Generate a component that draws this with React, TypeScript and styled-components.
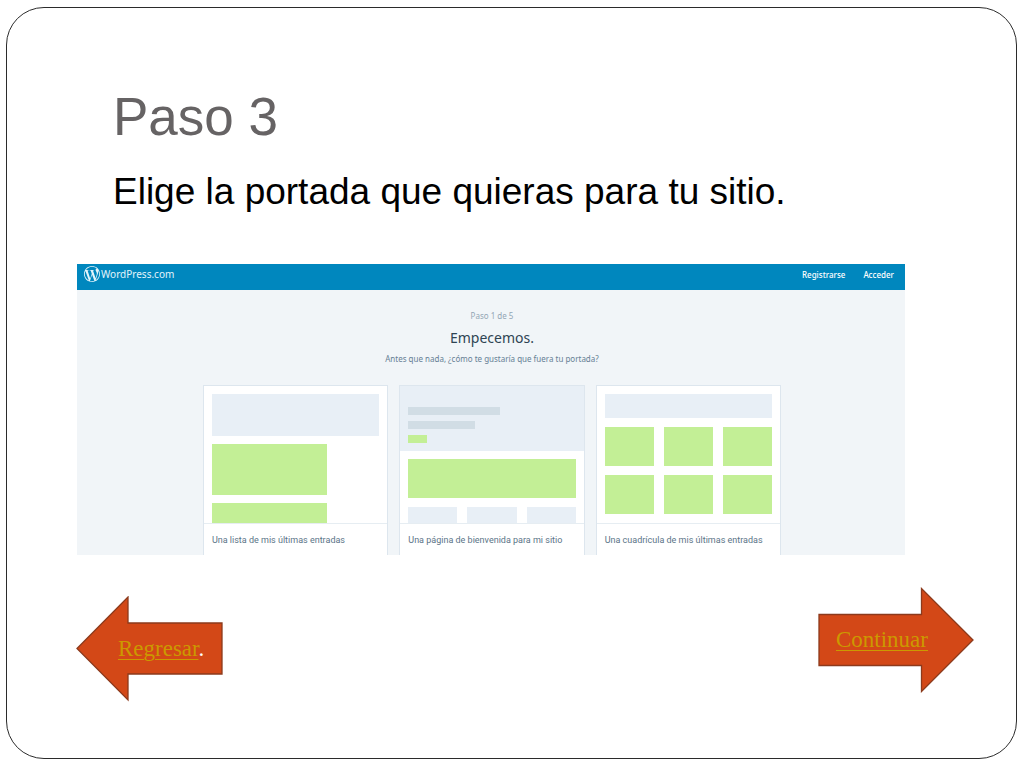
import React from "react";
import styled, { createGlobalStyle } from "styled-components";
import { SiWordpress } from "react-icons/si";

const GlobalStyle = createGlobalStyle`
  *, *::before, *::after { box-sizing: border-box; }
  body { margin: 0; background: #fff; }
`;

const Page = styled.div`
  display: flex;
  min-height: 100vh;
  padding: 7px 7px 10px 6px;
`;

const Slide = styled.main`
  flex: 1;
  min-width: 0;
  padding: 77px 42px 56px 70px;
  border: 1px solid #2b2b2b;
  border-radius: 38px;
  font-family: "Liberation Sans", Arial, sans-serif;
`;

const Title = styled.h1`
  margin: 0 0 0 36px;
  font-size: 53px;
  line-height: 64px;
  font-weight: 400;
  color: #666364;
`;

const Lead = styled.p`
  margin: 20px 0 0 36px;
  font-size: 37px;
  line-height: 46px;
  color: #000;
`;

const Site = styled.section`
  margin: 49px 69px 0 0;
  height: 291px;
  overflow: hidden;
  background: #f1f5f8;
  font-family: "Noto Sans", "Open Sans", sans-serif;
`;

const TopBar = styled.header`
  display: flex;
  align-items: flex-start;
  justify-content: space-between;
  height: 26px;
  padding: 2px 11px 0 7px;
  background: #0087be;
  color: #fff;
`;

const Brand = styled.a`
  display: flex;
  align-items: center;
  gap: 1px;
  color: #e3f4fb;
  font-size: 10px;
  line-height: 16px;
  text-decoration: none;
`;

const Menu = styled.nav`
  display: flex;
  gap: 18px;
`;

const MenuLink = styled.a`
  color: #fff;
  font-size: 8px;
  line-height: 18px;
  font-weight: 500;
  text-decoration: none;
`;

const Content = styled.div`
  padding: 19px 0 0 2px;
`;

const Intro = styled.div`
  text-align: center;
`;

const Step = styled.p`
  margin: 0;
  font-size: 8px;
  line-height: 14px;
  color: #93a6b5;
`;

const Heading = styled.h2`
  margin: 4px 0;
  font-size: 14px;
  line-height: 22px;
  font-weight: 400;
  color: #2e4453;
`;

const Question = styled.p`
  margin: 0;
  font-size: 8px;
  line-height: 12px;
  color: #668095;
`;

const Cards = styled.div`
  display: grid;
  grid-template-columns: repeat(3, 1fr);
  gap: 11px;
  width: 70%;
  margin: 20px auto 0;
`;

const Card = styled.article`
  border: 1px solid #dde6ee;
  border-bottom: 0;
  background: #fff;
`;

const Preview = styled.div`
  height: 138px;
  overflow: hidden;
  border-bottom: 1px solid #e6edf2;
`;

const Stack = styled.div<{ $gap: number }>`
  display: flex;
  flex-direction: column;
  gap: ${(p) => p.$gap}px;
  padding: 8px 8px 0;
`;

const Hero = styled.div`
  display: flex;
  flex-direction: column;
  gap: 6px;
  height: 65px;
  padding: 21px 8px 0;
  background: #e8eff6;
`;

const Trio = styled.div`
  display: grid;
  grid-template-columns: repeat(3, 1fr);
  gap: 9px 10px;
`;

const tones = { green: "#c3ef96", pale: "#e8eff6", grey: "#d1dde5" };

const Block = styled.div<{ $tone: keyof typeof tones; $h: number; $w?: string }>`
  flex: none;
  width: ${(p) => p.$w ?? "100%"};
  height: ${(p) => p.$h}px;
  background: ${(p) => tones[p.$tone]};
`;

const Caption = styled.p`
  margin: 0;
  padding: 9px 0 14px 8px;
  font-family: Roboto, "Noto Sans", sans-serif;
  font-size: 9px;
  line-height: 14px;
  white-space: nowrap;
  color: #5b7487;
`;

const Pager = styled.nav`
  display: flex;
  align-items: flex-start;
  justify-content: space-between;
  margin: 32px 0 0 -1px;
`;

const ArrowBox = styled.div<{ $w: number; $side: "left" | "right" }>`
  position: relative;
  display: flex;
  align-items: center;
  width: ${(p) => p.$w}px;
  height: 106px;
  margin-top: ${(p) => (p.$side === "left" ? 9 : 0)}px;
  padding-left: ${(p) => (p.$side === "left" ? 42 : 18)}px;
  font-family: "Liberation Serif", "Times New Roman", serif;
  font-size: 23px;
  line-height: 28px;
  color: #fff;
`;

const ArrowShape = styled.svg`
  position: absolute;
  inset: 0;
  fill: #d34817;
  stroke: #8c3a1c;
  stroke-width: 1.3;
`;

const ArrowText = styled.span`
  position: relative;
`;

const ArrowLink = styled.a`
  color: #cc9900;
  text-decoration-thickness: 1px;
  text-underline-offset: 3px;
`;

export default function App() {
  return (
    <>
      <GlobalStyle />
      <Page>
        <Slide>
          <Title>Paso 3</Title>
          <Lead>Elige la portada que quieras para tu sitio.</Lead>

          <Site>
            <TopBar>
              <Brand href="#">
                <SiWordpress size={16} aria-hidden />
                WordPress.com
              </Brand>
              <Menu>
                <MenuLink href="#">Registrarse</MenuLink>
                <MenuLink href="#">Acceder</MenuLink>
              </Menu>
            </TopBar>
            <Content>
              <Intro>
                <Step>Paso 1 de 5</Step>
                <Heading>Empecemos.</Heading>
                <Question>Antes que nada, ¿cómo te gustaría que fuera tu portada?</Question>
              </Intro>
              <Cards>
                <Card>
                  <Preview>
                    <Stack $gap={8}>
                      <Block $tone="pale" $h={42} />
                      <Block $tone="green" $h={51} $w="69%" />
                      <Block $tone="green" $h={51} $w="69%" />
                    </Stack>
                  </Preview>
                  <Caption>Una lista de mis últimas entradas</Caption>
                </Card>
                <Card>
                  <Preview>
                    <Hero>
                      <Block $tone="grey" $h={8} $w="55%" />
                      <Block $tone="grey" $h={8} $w="40%" />
                      <Block $tone="green" $h={8} $w="11%" />
                    </Hero>
                    <Stack $gap={9}>
                      <Block $tone="green" $h={39} />
                      <Trio>
                        <Block $tone="pale" $h={39} />
                        <Block $tone="pale" $h={39} />
                        <Block $tone="pale" $h={39} />
                      </Trio>
                    </Stack>
                  </Preview>
                  <Caption>Una página de bienvenida para mi sitio</Caption>
                </Card>
                <Card>
                  <Preview>
                    <Stack $gap={9}>
                      <Block $tone="pale" $h={24} />
                      <Trio>
                        {[0, 1, 2, 3, 4, 5].map((n) => (
                          <Block key={n} $tone="green" $h={39} />
                        ))}
                      </Trio>
                    </Stack>
                  </Preview>
                  <Caption>Una cuadrícula de mis últimas entradas</Caption>
                </Card>
              </Cards>
            </Content>
          </Site>

          <Pager>
            <ArrowBox $w={147} $side="left">
              <ArrowShape width="147" height="106" viewBox="0 0 147 106" aria-hidden>
                <path d="M1 52.5 52 1V27H146V78H52V104Z" />
              </ArrowShape>
              <ArrowText>
                <ArrowLink href="#">Regresar</ArrowLink>.
              </ArrowText>
            </ArrowBox>
            <ArrowBox $w={156} $side="right">
              <ArrowShape width="156" height="106" viewBox="0 0 156 106" aria-hidden>
                <path d="M155 53 103.500 1.500V27.500H1V78.500H103.500V104.500Z" />
              </ArrowShape>
              <ArrowText>
                <ArrowLink href="#">Continuar</ArrowLink>
              </ArrowText>
            </ArrowBox>
          </Pager>
        </Slide>
      </Page>
    </>
  );
}
